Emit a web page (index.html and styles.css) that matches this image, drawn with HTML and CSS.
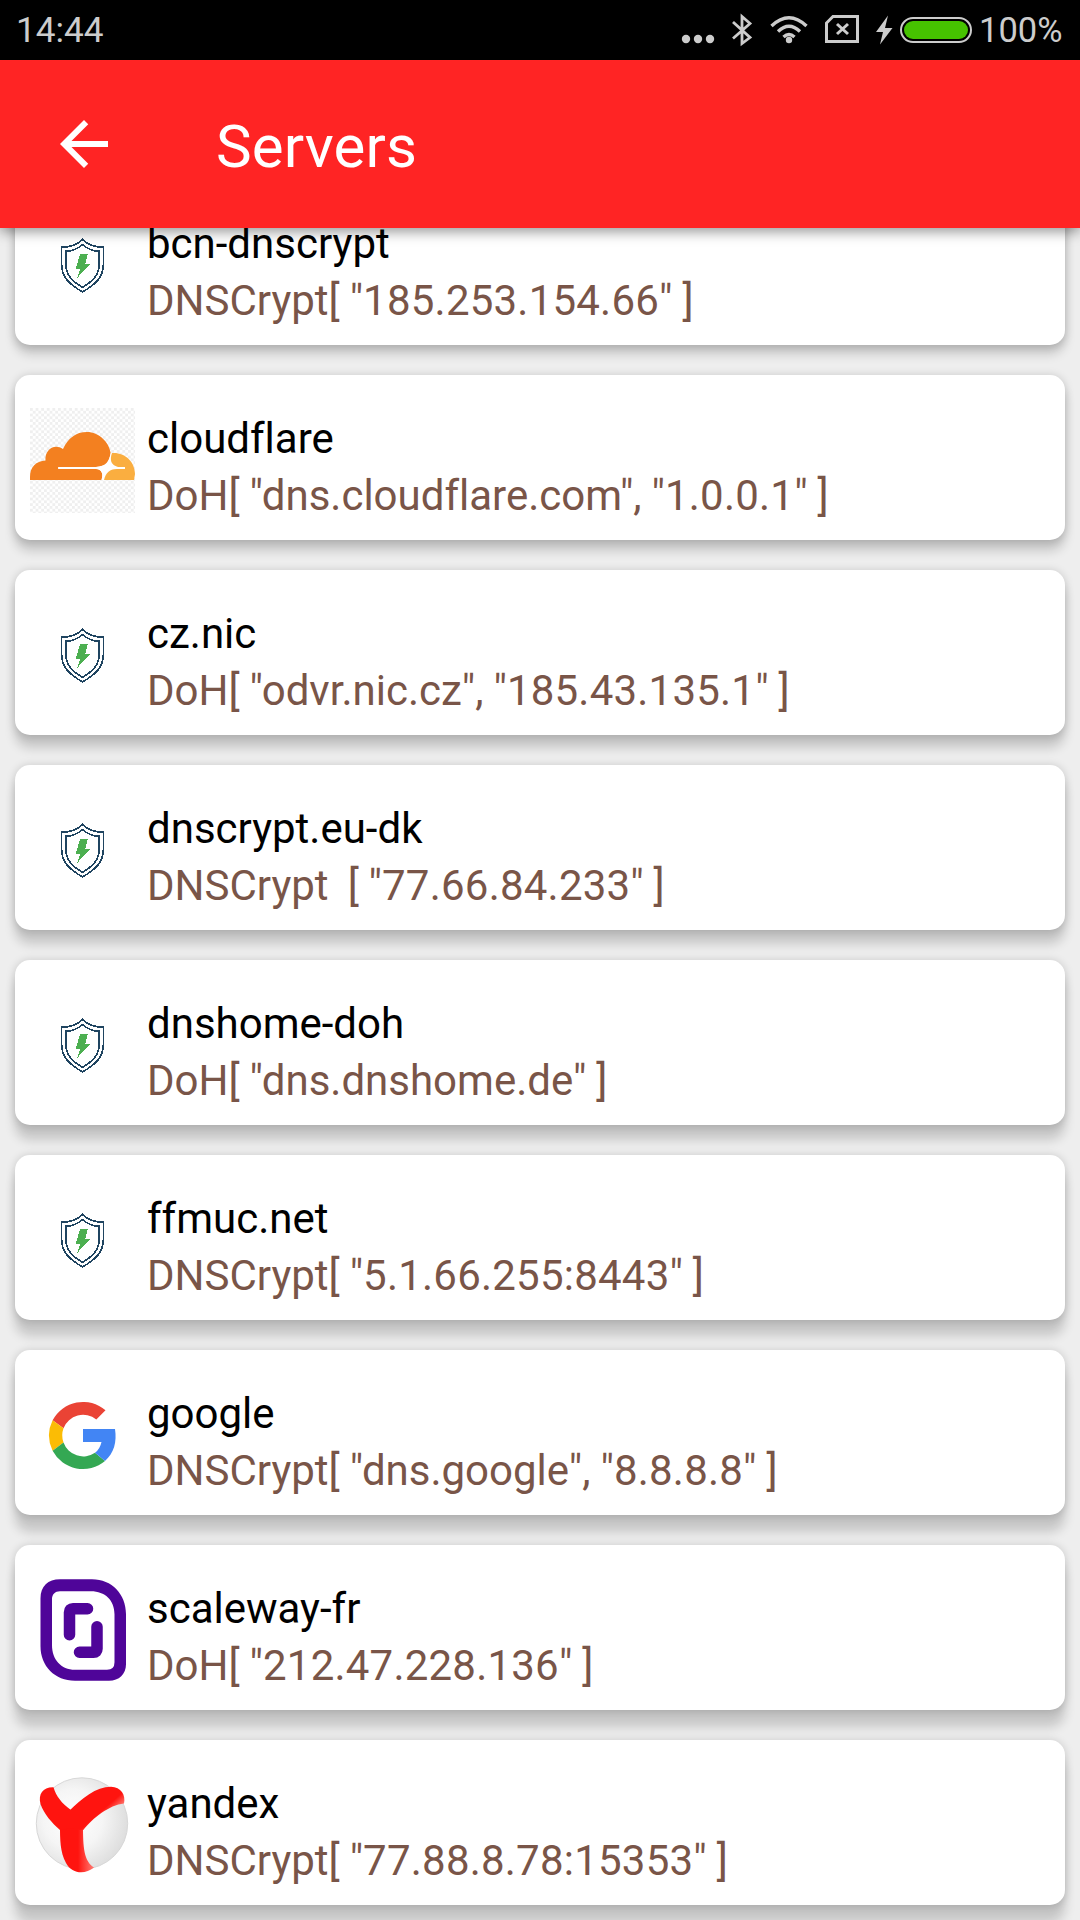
FILE: index.html
```html
<!DOCTYPE html>
<html lang="en">
<head>
<meta charset="utf-8">
<title>Servers</title>
<link rel="stylesheet" href="styles.css">
</head>
<body>
<svg class="defs" aria-hidden="true">
  <symbol id="shield" viewBox="0 0 44 55">
    <g shape-rendering="crispEdges">
      <path d="M22 1.500C17 6.500 10 9 1.500 9V26C1.500 39 10 46 22 53C34 46 42.500 39 42.500 26V9C34 9 27 6.500 22 1.500Z" fill="none" stroke="#1f4460" stroke-width="1.600"/>
      <path d="M22 6.500C17.500 10.500 12 12.800 5.800 13V26.500C5.800 36.500 11.500 42 22 48.500C32.500 42 38.200 36.500 38.200 26.500V13C32 12.800 26.500 10.500 22 6.500Z" fill="none" stroke="#1f4460" stroke-width="1.600"/>
      <path d="M19.500 16H27L24.500 26H29L17 39L20 30H15.500Z" fill="#4caf50"/>
    </g>
  </symbol>
</svg>
<header class="top">
  <div class="status">
    <span class="clock">14:44</span>
    <svg class="status-icons" width="312" height="60" viewBox="0 0 312 60" fill="none" stroke="#ccc">
      <g fill="#ccc" stroke="none"><circle cx="26" cy="39" r="4.200"/><circle cx="38" cy="39" r="4.200"/><circle cx="50" cy="39" r="4.200"/></g>
      <path d="M73 22L90 37.500L82 43.500V16.500L90 23.500L73 38.500" stroke-width="2.800"/>
      <path d="M111.500 26Q129 9.500 146.500 26M118 31.500Q129 21 140 31.500M123.500 37Q129 32 134.500 37" stroke-width="3.400"/>
      <circle cx="129" cy="40" r="3.200" fill="#ccc" stroke="none"/>
      <path d="M173 16.500H197.500V41.500H166.500V23ZM177 24L188 34M188 24L177 34" stroke-width="3"/>
      <path d="M228 15.500L216 32H223L220 44.500L232.500 28H225Z" fill="#ccc" stroke="none"/>
      <rect x="241" y="18" width="70" height="24" rx="12" stroke-width="2"/>
      <rect x="244" y="21" width="64" height="18" rx="9" fill="#46c300" stroke="none"/>
    </svg>
    <span class="percent">100%</span>
  </div>
  <div class="toolbar">
    <svg width="72" height="72" viewBox="0 0 24 24"><path fill="#fff" d="M20 11H7.830l5.590-5.590L12 4l-8 8 8 8 1.410-1.410L7.830 13H20v-2z"/></svg>
    <h1>Servers</h1>
  </div>
</header>
<main class="list">
  <article class="card"><div class="icon"><svg width="45" height="56"><use href="#shield"/></svg></div><div><h2>bcn-dnscrypt</h2><p>DNSCrypt[ "<span class="num">185.253.154.66</span>" ]</p></div></article>
  <article class="card"><div class="icon"><svg width="105" height="105" viewBox="0 0 105 105">
    <defs><pattern id="checks" width="5.600" height="5.600" patternUnits="userSpaceOnUse"><path d="M0 0H2.800V2.800H0ZM2.800 2.800H5.600V5.600H2.800Z" fill="#efefef"/></pattern></defs>
    <rect width="105" height="105" fill="#fff"/><rect width="105" height="105" fill="url(#checks)"/>
    <path d="M0 72V69C0 59 6 53 15.500 52.500C14.500 42 24 35 33 41C38 30 46 24 57 24C69 24 79 34 80.700 45C79 54 76 58.500 66 59H28.300V61H66C72 61.500 73.500 66 71.500 72Z" fill="#f38020"/>
    <path d="M80.700 45C79 54 76 58.500 66 59H28.300V61H66C72 61.500 73.500 66 71.500 72H74C76 65 79 61 87 61H95V59H88C81 57 79.500 52 82 45Z" fill="#fff"/>
    <path d="M82 45C95 44 105 54 105 66L104 72H74C76 65 79 61 87 61H95V59H88C81 57 79.500 52 82 45Z" fill="#faae40"/>
  </svg></div><div><h2>cloudflare</h2><p>DoH[ "dns.cloudflare.com", "<span class="num">1.0.0.1</span>" ]</p></div></article>
  <article class="card"><div class="icon"><svg width="45" height="56"><use href="#shield"/></svg></div><div><h2>cz.nic</h2><p>DoH[ "odvr.nic.cz", "<span class="num">185.43.135.1</span>" ]</p></div></article>
  <article class="card"><div class="icon"><svg width="45" height="56"><use href="#shield"/></svg></div><div><h2>dnscrypt.eu-dk</h2><p class="wide-gap">DNSCrypt&nbsp; [ "<span class="num">77.66.84.233</span>" ]</p></div></article>
  <article class="card"><div class="icon"><svg width="45" height="56"><use href="#shield"/></svg></div><div><h2>dnshome-doh</h2><p>DoH[ "dns.dnshome.de" ]</p></div></article>
  <article class="card"><div class="icon"><svg width="45" height="56"><use href="#shield"/></svg></div><div><h2>ffmuc.net</h2><p>DNSCrypt[ "<span class="num">5.1.66.255:8443</span>" ]</p></div></article>
  <article class="card"><div class="icon"><svg width="105" height="105" viewBox="0 0 105 105">
    <path d="M22.600 37.300A34.300 34.300 0 0 1 75.500 27.300L66.300 36.500A21 21 0 0 0 33.500 45.200Z" fill="#ea4335"/>
    <path d="M22.600 37.300L33.500 45.200A21 21 0 0 0 33.500 59.500L22.600 67.700A34.300 34.300 0 0 1 22.600 37.300Z" fill="#fbbc05"/>
    <path d="M22.600 67.700L33.500 59.500A21 21 0 0 0 65 69.800L75 78A34.300 34.300 0 0 1 22.600 67.700Z" fill="#34a853"/>
    <path d="M53 46H85C87 59 84 70 75 78L65 69.800Q70 66 71.500 59H53Z" fill="#4285f4"/>
  </svg></div><div><h2>google</h2><p>DNSCrypt[ "dns.google", "<span class="num">8.8.8.8</span>" ]</p></div></article>
  <article class="card"><div class="icon"><svg width="105" height="105" viewBox="0 2.700 105 105">
    <path fill="#4f0599" fill-rule="evenodd" d="M30 4H62C82 4 96 19 96 39V89C96 99 89 105.500 79 105.500H45C25 105.500 10.500 91 10.500 71V23C10.500 11 18 4 30 4ZM30 16C25 16 22 19 22 24V70C22 84 31 94.500 45 94.500H77Q84.500 94.500 84.500 87V39C84.500 25 75 16 61 16Z"/>
    <path d="M57.500 33.500H43Q39.500 33.500 39.500 37V59.500M67 51.500V73.500Q67 77 63.500 77H49.500" fill="none" stroke="#4f0599" stroke-width="11.500" stroke-linecap="round"/>
  </svg></div><div><h2>scaleway-fr</h2><p>DoH[ "<span class="num">212.47.228.136</span>" ]</p></div></article>
  <article class="card"><div class="icon"><svg width="105" height="105" viewBox="0 0 105 105">
    <defs>
      <radialGradient id="ball" cx=".4" cy=".45" r=".65"><stop offset="0" stop-color="#fff"/><stop offset=".5" stop-color="#f5f5f5"/><stop offset="1" stop-color="#dadada"/></radialGradient>
      <linearGradient id="arm" gradientUnits="userSpaceOnUse" x1="68" y1="24" x2="82" y2="40"><stop offset=".6" stop-color="#ff140f"/><stop offset="1" stop-color="#ff6a62"/></linearGradient>
      <linearGradient id="stem" gradientUnits="userSpaceOnUse" x1="48" y1="0" x2="62" y2="0"><stop offset="0" stop-color="#ff140f"/><stop offset="1" stop-color="#ff7068"/></linearGradient>
    </defs>
    <circle cx="52" cy="50.500" r="45.700" fill="url(#ball)" stroke="#d8d8d8"/>
    <path d="M30 52H53C53 75 54 88 64 94.500C55 102 42 101 36 90C30 79 30 66 30 52Z" fill="url(#stem)"/>
    <path d="M23.500 14.300C26 23 32 31 41 37L50 54L30 57C22 50 14 41 10.500 31C8 21 13 14 23.500 14.300Z" fill="#ff140f"/>
    <path d="M38 39C52 25 66 13.700 81 13.700C91 14 96 22 94 30.500C79 32 63 45 53.300 57C43 57 34 50 38 39Z" fill="url(#arm)"/>
  </svg></div><div><h2>yandex</h2><p>DNSCrypt[ "<span class="num">77.88.8.78:15353</span>" ]</p></div></article>
</main>
</body>
</html>
```
FILE: styles.css
```css
* { box-sizing: border-box; margin: 0; }
body {
  width: 1080px;
  height: 1920px;
  overflow: hidden;
  display: flex;
  flex-direction: column;
  background: #eee;
  font-family: Roboto, "Liberation Sans", sans-serif;
  font-variant-ligatures: none;
}
svg { display: block; flex: none; }
.defs { position: absolute; width: 0; height: 0; }
.top { position: relative; z-index: 1; box-shadow: 0 4px 12px rgba(0, 0, 0, .4); }
.status {
  height: 60px;
  display: flex;
  align-items: center;
  padding: 0 18px 0 16px;
  background: #000;
  color: #ccc;
  font-size: 35.2px;
  line-height: 60px;
}
.status-icons { margin-left: auto; }
.percent { width: 83px; margin-left: 7px; font-size: 34.5px; white-space: nowrap; }
.toolbar {
  height: 168px;
  display: flex;
  align-items: center;
  gap: 96px;
  padding-left: 48px;
  background: #ff2424;
  color: #fff;
}
.toolbar h1 { font-size: 60px; font-weight: 400; line-height: 72px; padding-top: 5px; letter-spacing: .15px; }
.list {
  flex: none;
  display: flex;
  flex-direction: column;
  gap: 30px;
  margin-top: -48px;
  padding: 0 15px;
}
.card {
  --drop: 9px;
  height: 165px;
  display: flex;
  align-items: flex-start;
  gap: 12px;
  padding: 33px 15px 0;
  border-radius: 15px;
  background: #fff;
  box-shadow: 0 var(--drop) 11px rgba(0, 0, 0, .165), 0 1px 10px rgba(0, 0, 0, .18);
}
.card:nth-child(2) { --drop: 11px; }
.card:nth-child(3) { --drop: 13px; }
.card:nth-child(4) { --drop: 14px; }
.card:nth-child(5) { --drop: 15px; }
.card:nth-child(6) { --drop: 16px; }
.card:nth-child(n+7) { --drop: 17px; }
.card:nth-child(9) { --drop: 18px; }
.icon {
  width: 105px;
  height: 105px;
  display: grid;
  place-items: center;
}
.card h2, .card p {
  font-size: 42px;
  font-weight: 400;
  line-height: 57px;
  white-space: pre;
}
.card h2 { color: #000; padding-top: 2px; }
.card p { color: #795548; word-spacing: -.5px; }
.card .wide-gap { word-spacing: -.8px; }
.num { letter-spacing: .22px; }
```
